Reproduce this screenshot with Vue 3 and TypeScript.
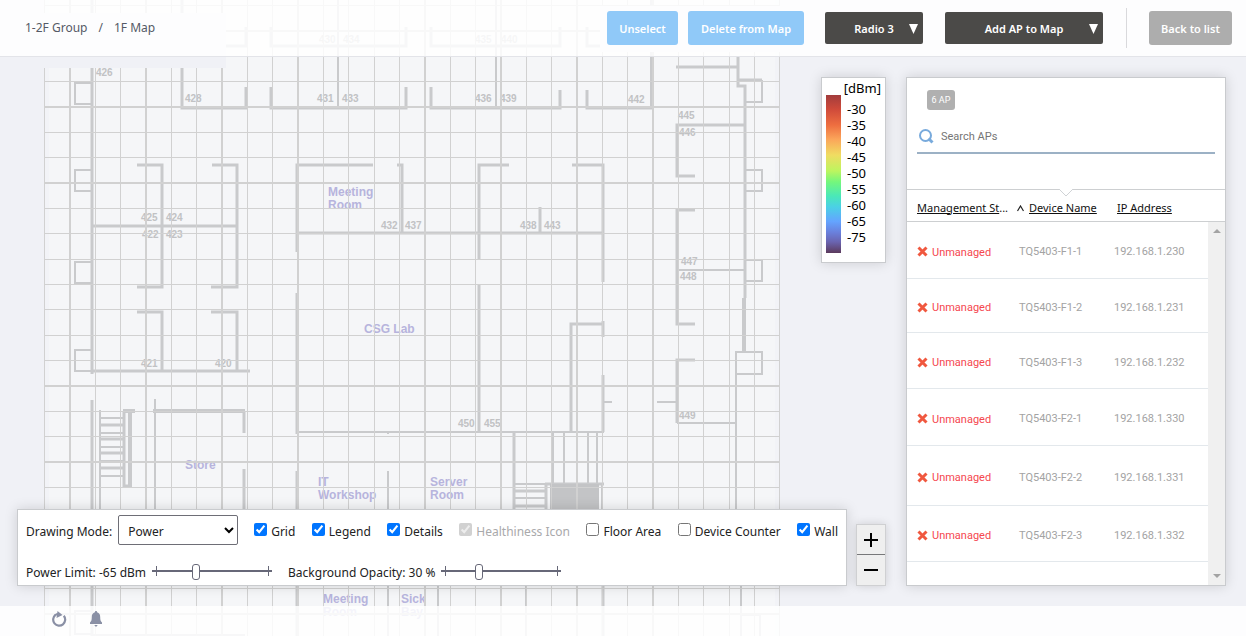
<script setup lang="ts">
import { ref } from 'vue'

interface AccessPoint {
  name: string
  ip: string
  height: number
}

const accessPoints: AccessPoint[] = [
  { name: 'TQ5403-F1-1', ip: '192.168.1.230', height: 57 },
  { name: 'TQ5403-F1-2', ip: '192.168.1.231', height: 54 },
  { name: 'TQ5403-F1-3', ip: '192.168.1.232', height: 56 },
  { name: 'TQ5403-F2-1', ip: '192.168.1.330', height: 57 },
  { name: 'TQ5403-F2-2', ip: '192.168.1.331', height: 60 },
  { name: 'TQ5403-F2-3', ip: '192.168.1.332', height: 56 },
]

const layers = ref([
  { id: 'grid', label: 'Grid', checked: true, disabled: false },
  { id: 'legend', label: 'Legend', checked: true, disabled: false },
  { id: 'details', label: 'Details', checked: true, disabled: false },
  { id: 'health', label: 'Healthiness Icon', checked: true, disabled: true },
  { id: 'floor', label: 'Floor Area', checked: false, disabled: false },
  { id: 'counter', label: 'Device Counter', checked: false, disabled: false },
  { id: 'wall', label: 'Wall', checked: true, disabled: false },
])

const levels = [-30, -35, -40, -45, -50, -55, -60, -65, -75]
const powerLimit = ref(-65)
const opacity = ref(30)
const search = ref('')

// Grid lines of the floor plan
const thinX = [44, 95, 120, 171, 196, 247, 272, 323, 348, 374, 399, 450, 475, 526, 551, 602, 627, 678, 703, 729, 754, 779]
const thickX = [70, 146, 222, 298, 425, 501, 577, 653]
const thinY = [5, 56, 81, 132, 157, 208, 233, 259, 284, 309, 335, 360, 411, 436, 487, 512, 563, 588]
const thickY = [31, 107, 183, 386, 462, 538, 614]

// Walls: path, stroke width
const walls: [string, number][] = [
  ['M92 0V374 M92 400V636 M92 226H238 M92 371H250', 3],
  ['M92 83H75V104H92 M92 170H75V191H92 M92 262H75V283H92 M92 350H75V371H92 M92 611H75V634H92', 2],
  ['M182 0V108H247 M246 108V87 M226 46H246V27', 3],
  ['M271 87V108H406V87 M271 27V46H406V27', 3],
  ['M338 0V107 M496 0V107', 2],
  ['M431 87V108H560V90 M431 27V46H560V27 M587 90V108H653 M587 27V46H600', 3],
  ['M652 0V108', 4],
  ['M137 165H162V287H137 M212 165H237V287H211 M137 312H162V371 M211 312H237V371', 3],
  ['M297 252V165H373 M397 165H402V233 M298 233H604 M297 293V434', 3],
  ['M479 259V165H509 M572 165H603V282 M540 207V233 M479 284V431', 3],
  ['M571 431V324H604 M603 321V337 M603 375V432', 3],
  ['M298 432H604 M604 402H612 M657 402H677 M677 423H736', 2],
  ['M676 67H738 M738 57V86H745V298 M738 80H762', 3],
  ['M762 80V102H745 M745 170H762V191H745 M745 260H762V281H745 M736 510V352H762V374H736', 2],
  ['M744 298V352', 4],
  ['M745 125H677V176H695 M695 210H677V324H695 M695 360H677V423', 3],
  ['M677 270H744', 2],
  ['M100 410V510 M100 418H124 M100 433H124 M100 447H124 M100 461H124 M100 476H124 M155 399V510', 2],
  ['M100 425H124 M100 439H124 M100 453H124 M100 468H124 M124 411V487', 3],
  ['M123 411H135 M130 411V487 M153 411H245', 4],
  ['M244 411V433 M244 469V510 M297 471V636 M124 486H132', 3],
  ['M388 471V636 M388 431V434 M438 586V636 M526 586V636 M741 586V636 M741 615H760V636 M92 635H245', 2],
  ['M514 432V510 M603 586V636 M545 484H604 M546 484V510 M514 506H546 M514 491H546', 3],
  ['M553 432V484 M564 432V484 M577 432V484 M588 432V484 M597 432V484 M602 484V510 M514 484H546 M514 498H546', 2],
]

const rooms: [string, number, number][] = [
  ['430', 319, 43], ['434', 343, 43], ['435', 475, 43], ['440', 501, 43],
  ['426', 96, 76], ['428', 185, 102], ['431', 317, 102], ['433', 342, 102],
  ['436', 475, 102], ['439', 500, 102], ['442', 628, 103], ['445', 678, 119],
  ['446', 679, 136], ['425', 141, 221], ['424', 166, 221], ['422', 142, 238],
  ['423', 166, 238], ['432', 381, 229], ['437', 405, 229], ['438', 520, 229],
  ['443', 544, 229], ['447', 681, 265], ['448', 680, 280], ['421', 141, 367],
  ['420', 215, 367], ['449', 679, 419], ['450', 458, 427], ['455', 484, 427],
]

const areas: [string, number, number][] = [
  ['Meeting', 328, 196], ['Room', 328, 209], ['CSG Lab', 364, 333], ['Store', 185, 469],
  ['IT', 318, 486], ['Workshop', 318, 499], ['Server', 430, 486], ['Room', 430, 499],
  ['Meeting', 323, 603], ['Room', 323, 616], ['Sick', 401, 603], ['Bay', 401, 616],
]
</script>

<template>
  <div class="app">
    <svg class="floor" width="780" height="636" viewBox="0 0 780 636" role="img" aria-label="1F floor plan">
      <rect x="44" y="0" width="736" height="636" fill="#f2f3f7" />
      <rect x="49" y="0" width="726" height="636" fill="#f5f6f8" />
      <path v-for="([d, w], i) in walls" :key="i" :d="d" :stroke-width="w" fill="none" stroke="#c9cacc" />
      <rect x="550" y="484" width="49" height="26" fill="#c3c4c6" />
      <g class="room">
        <text v-for="([t, x, y], i) in rooms" :key="i" :x="x" :y="y">{{ t }}</text>
      </g>
      <g class="area">
        <text v-for="([t, x, y], i) in areas" :key="i" :x="x" :y="y">{{ t }}</text>
      </g>
      <g fill="#d1d1d1">
        <rect v-for="x in thinX" :key="'a' + x" :x="x" y="0" width="1" height="636" />
        <rect v-for="x in thickX" :key="'b' + x" :x="x - 1" y="0" width="2" height="636" />
        <rect v-for="y in thinY" :key="'c' + y" x="44" :y="y" width="736" height="1" />
        <rect v-for="y in thickY" :key="'d' + y" x="44" :y="y - 1" width="736" height="2" />
      </g>
      <rect x="0" y="13" width="226" height="55" fill="#f0f1f6" />
      <rect x="600" y="6" width="180" height="46" fill="#f0f1f6" />
    </svg>

    <header class="top">
      <nav class="crumbs" aria-label="Breadcrumb">
        <a href="#group">1-2F Group</a>
        <span>/</span>
        <span>1F Map</span>
      </nav>
      <div class="actions">
        <button class="btn blue unselect" type="button">Unselect</button>
        <button class="btn blue delete" type="button">Delete from Map</button>
        <div class="drop radio">
          <select aria-label="Radio"><option>Radio 3</option></select>
          <svg width="9" height="10" viewBox="0 0 9 10"><path d="M0 0H9L4.500 10Z" fill="#fff" /></svg>
        </div>
        <div class="drop add">
          <select aria-label="Add AP to Map"><option>Add AP to Map</option></select>
          <svg width="9" height="10" viewBox="0 0 9 10"><path d="M0 0H9L4.500 10Z" fill="#fff" /></svg>
        </div>
        <span class="divider"></span>
        <button class="btn gray" type="button">Back to list</button>
      </div>
    </header>

    <main class="main">
      <div class="stage">
        <section class="legend card" aria-label="Signal level">
          <div class="unit">[dBm]</div>
          <div class="scale">
            <div class="bar"></div>
            <ul>
              <li v-for="l in levels" :key="l">{{ l }}</li>
            </ul>
          </div>
        </section>

        <div class="bottom">
          <section class="controls card">
            <div class="line">
              <label for="mode">Drawing Mode:</label>
              <div class="mode">
                <select id="mode"><option>Power</option></select>
                <svg width="10" height="7" viewBox="0 0 10 7"><path d="M1 1L5 5L9 1" fill="none" stroke="#000" stroke-width="2" /></svg>
              </div>
              <div class="checks">
                <label v-for="l in layers" :key="l.id" :class="{ off: l.disabled }">
                  <input v-model="l.checked" type="checkbox" :disabled="l.disabled" />{{ l.label }}
                </label>
              </div>
            </div>
            <div class="line sliders">
              <label for="limit">Power Limit: {{ powerLimit }} dBm</label>
              <input id="limit" v-model.number="powerLimit" type="range" min="-85" max="-29" />
              <label class="second" for="opacity">Background Opacity: {{ opacity }} %</label>
              <input id="opacity" v-model.number="opacity" type="range" min="0" max="100" />
            </div>
          </section>
          <div class="zoom">
            <button type="button" aria-label="Zoom in">
              <svg width="14" height="14" viewBox="0 0 14 14"><path d="M0 7H14M7 0V14" stroke="#000" stroke-width="2" /></svg>
            </button>
            <button type="button" aria-label="Zoom out">
              <svg width="14" height="14" viewBox="0 0 14 14"><path d="M0 7H14" stroke="#000" stroke-width="2" /></svg>
            </button>
          </div>
        </div>
      </div>

      <aside class="devices card">
        <div class="tools">
          <span class="badge">6 AP</span>
          <label class="search">
            <svg width="15" height="15" viewBox="0 0 15 15">
              <circle cx="6.500" cy="6.500" r="5.500" fill="none" stroke="#78aadc" stroke-width="2" />
              <path d="M9.500 9.500L13.500 13.500" stroke="#78aadc" stroke-width="3" />
            </svg>
            <input v-model="search" type="text" placeholder="Search APs" aria-label="Search APs" />
          </label>
        </div>
        <div class="list">
          <table>
            <thead>
              <tr>
                <th class="c1"><a href="#status">Management St</a>...</th>
                <th class="c2">
                  <svg width="7" height="7" viewBox="0 0 7 7"><path d="M0.500 6L3.500 1L6.500 6" fill="none" stroke="#222" stroke-width="1.200" /></svg><a href="#name">Device Name</a>
                </th>
                <th class="c3"><a href="#ip">IP Address</a></th>
              </tr>
            </thead>
            <tbody>
              <tr v-for="ap in accessPoints" :key="ap.name" :style="{ height: ap.height + 'px' }">
                <td class="c1 bad">
                  <svg width="11" height="11" viewBox="0 0 11 11"><path d="M1.500 1.500L9.500 9.500M9.500 1.500L1.500 9.500" stroke="#f0583f" stroke-width="3" /></svg>
                  <span>Unmanaged</span>
                </td>
                <td>{{ ap.name }}</td>
                <td class="ip">{{ ap.ip }}</td>
              </tr>
            </tbody>
          </table>
          <svg class="notch" width="14" height="8" viewBox="0 0 14 8"><path d="M0 0L7 7L14 0" fill="#fff" stroke="#d0d3d6" /></svg>
          <div class="scroll" aria-hidden="true">
            <svg width="8" height="4" viewBox="0 0 8 4"><path d="M0 4L4 0L8 4Z" fill="#a3a3a3" /></svg>
            <svg width="8" height="4" viewBox="0 0 8 4"><path d="M0 0L4 4L8 0Z" fill="#a3a3a3" /></svg>
          </div>
        </div>
      </aside>
    </main>

    <footer class="foot">
      <button type="button" aria-label="Refresh">
        <svg width="16" height="16" viewBox="0 0 16 16">
          <path d="M12.800 4.800A6 6 0 1 1 4.500 3.900" fill="none" stroke="#8a90a5" stroke-width="2.200" />
          <path d="M6.500 0L11.500 4L5.500 7Z" fill="#8a90a5" />
          <path d="M4 4.300Q6 2.800 9 3.200" fill="none" stroke="#8a90a5" stroke-width="2" />
        </svg>
      </button>
      <button type="button" aria-label="Notifications">
        <svg width="12" height="16" viewBox="0 0 12 16">
          <path d="M6 0C6.700 0 7.100 0.500 7.100 1.300C9.300 1.900 10.200 3.600 10.200 6C10.200 9 10.600 10.300 12 11.500V13H0V11.500C1.400 10.300 1.800 9 1.800 6C1.800 3.600 2.700 1.900 4.900 1.300C4.900 0.500 5.300 0 6 0ZM4.500 14H7.500C7.300 15.300 6.800 15.600 6 15.600C5.200 15.600 4.700 15.300 4.500 14Z" fill="#8a90a5" />
        </svg>
      </button>
    </footer>
  </div>
</template>

<style>
body {
  background: #f0f1f6;
}
</style>

<style scoped>
* {
  box-sizing: border-box;
}
.app {
  position: relative;
  display: flex;
  flex-direction: column;
  min-height: 100vh;
  overflow: hidden;
  background: #f0f1f6;
  font-family: "Noto Sans", "Open Sans", sans-serif;
  font-size: 12px;
  color: #222;
}
button,
select,
input {
  font-family: inherit;
}
a {
  color: inherit;
}
.floor {
  position: absolute;
  left: 0;
  top: 0;
}
.floor text {
  font-family: "Liberation Sans", sans-serif;
  font-weight: bold;
}
.room text {
  font-size: 10px;
  fill: #c1c2c4;
}
.area text {
  font-size: 12px;
  fill: #b7b4dd;
}
.top {
  position: relative;
  display: flex;
  align-items: center;
  justify-content: space-between;
  height: 57px;
  padding: 0 14px 0 25px;
  border-bottom: 1px solid #e3e4e9;
  background: rgba(255, 255, 255, 0.85);
}
.crumbs {
  display: flex;
  gap: 11px;
  padding-bottom: 2px;
  color: #555a66;
}
.crumbs a {
  text-decoration: none;
}
.actions {
  display: flex;
  align-items: center;
}
.btn {
  height: 34px;
  padding: 0;
  border: 0;
  border-radius: 3px;
  font-size: 11px;
  font-weight: 600;
  color: #fff;
}
.blue {
  background: #90c9f8;
}
.unselect {
  width: 71px;
}
.delete {
  width: 116px;
  margin: 0 21px 0 10px;
}
.gray {
  width: 83px;
  background: #adadad;
}
.drop {
  position: relative;
}
.drop select {
  appearance: none;
  width: 100%;
  height: 32px;
  padding: 0;
  border: 0;
  border-radius: 2px;
  background: #4b4a48;
  color: #fff;
  font-size: 11px;
  font-weight: 600;
  text-align: center;
  text-align-last: center;
}
.drop svg {
  position: absolute;
  right: 5px;
  top: 12px;
  pointer-events: none;
}
.radio {
  width: 98px;
  margin-right: 22px;
}
.add {
  width: 158px;
}
.divider {
  width: 1px;
  height: 40px;
  margin: 0 22px 0 23px;
  background: #d9d9dc;
}
.main {
  position: relative;
  flex: 1;
  display: flex;
  gap: 20px;
  padding: 20px 20px 20px 17px;
}
.card {
  border: 1px solid #c9cbce;
  background: #fff;
  box-shadow: 0 0 12px rgba(0, 0, 0, 0.15);
}
.stage {
  flex: 1;
  display: flex;
  flex-direction: column;
  justify-content: space-between;
  min-width: 0;
}
.legend {
  align-self: flex-end;
  width: 65px;
  height: 186px;
  font-size: 13px;
  color: #000;
}
.unit {
  height: 17px;
  padding-right: 4px;
  line-height: 20px;
  text-align: right;
}
.scale {
  display: flex;
  gap: 6px;
  padding-left: 4px;
}
.bar {
  width: 15px;
  height: 158px;
  background: linear-gradient(#a23c3c, #cf4a3a 9%, #ee6e40 19%, #fba55a 28%, #f0dc62 38%, #bdf55f 48%, #74f77c 55%, #4ae8b8 64%, #4bd0e6 71%, #64a4ff 80%, #6a80dc 87%, #6a64b0 93%, #5c3a5c);
}
.scale ul {
  margin: 6px 0 0;
  padding: 0;
  list-style: none;
}
.scale li {
  height: 16px;
  line-height: 16px;
}
.bottom {
  display: flex;
  align-items: flex-end;
  gap: 9px;
}
.controls {
  flex: 1;
  height: 77px;
  padding: 5px 8px;
}
.line {
  display: flex;
  align-items: center;
  height: 30px;
}
.line label {
  padding-top: 2px;
}
.mode {
  position: relative;
  width: 120px;
  margin: 0 16px 0 6px;
}
.mode select {
  appearance: none;
  width: 100%;
  height: 30px;
  padding: 2px 9px 0;
  border: 1px solid #6e6e76;
  border-radius: 2px;
  background: #fff;
  font-size: 12px;
  color: #222;
}
.mode svg {
  position: absolute;
  right: 4px;
  top: 12px;
  pointer-events: none;
}
.checks {
  flex: 1;
  display: flex;
  justify-content: space-between;
}
.checks label {
  display: flex;
  align-items: center;
  gap: 4px;
  white-space: nowrap;
}
.checks input {
  width: 13px;
  height: 13px;
  margin: 0 0 4px;
}
.checks .off {
  color: #a9a9ab;
}
.sliders {
  margin-top: 11px;
}
.sliders input {
  appearance: none;
  width: 120px;
  height: 16px;
  margin: 2px 0 0 6px;
  background:
    linear-gradient(#676878, #676878) 4px 2px / 1px 10px no-repeat,
    linear-gradient(#676878, #676878) 116px 2px / 1px 10px no-repeat,
    linear-gradient(#676878, #676878) 0 6px / 120px 2px no-repeat;
}
.sliders input::-webkit-slider-thumb {
  appearance: none;
  width: 8px;
  height: 16px;
  border: 1px solid #676878;
  border-radius: 3px;
  background: #fff;
}
.sliders .second {
  margin-left: 16px;
}
.zoom {
  width: 30px;
  border: 1px solid #cfd0d2;
  box-shadow: 0 0 10px rgba(0, 0, 0, 0.15);
}
.zoom button {
  display: flex;
  align-items: center;
  justify-content: center;
  width: 100%;
  height: 30px;
  padding: 0;
  border: 0;
  background: #efefef;
}
.zoom button:first-child {
  border-bottom: 1px solid #77787a;
}
.devices {
  display: flex;
  flex-direction: column;
  width: 320px;
}
.tools {
  display: flex;
  flex-direction: column;
  align-items: flex-start;
  height: 111px;
  padding: 12px 10px 0;
}
.badge {
  width: 28px;
  height: 20px;
  margin-left: 10px;
  border-radius: 3px;
  background: #b0b0b0;
  color: #fff;
  font-family: Roboto, sans-serif;
  font-size: 9px;
  line-height: 21px;
  text-align: center;
}
.search {
  display: flex;
  align-items: center;
  gap: 7px;
  width: 100%;
  height: 34px;
  margin-top: 10px;
  padding: 0 2px;
  border-bottom: 2px solid #9cb1c5;
}
.search input {
  flex: 1;
  min-width: 0;
  padding: 0;
  border: 0;
  outline: 0;
  background: transparent;
  font-family: Roboto, sans-serif;
  font-size: 11px;
}
.search input::placeholder {
  color: #757575;
}
.list {
  position: relative;
  flex: 1;
  border-top: 1px solid #cdcfd1;
}
table {
  width: 100%;
  border-collapse: separate;
  border-spacing: 0;
  table-layout: fixed;
}
thead tr {
  height: 32px;
}
th {
  padding: 3px 0 0;
  border-bottom: 1px solid #cdcfd1;
  font-size: 11px;
  font-weight: 400;
  text-align: left;
  white-space: nowrap;
  color: #111;
}
th.c1 {
  width: 110px;
  padding-left: 10px;
}
th.c2 {
  width: 97px;
}
th.c3 {
  padding-left: 3px;
}
.c2 svg {
  margin-right: 5px;
}
td {
  padding: 3px 0 0 2px;
  border-bottom: 1px solid #e3e8ec;
  font-family: Roboto, sans-serif;
  font-size: 11px;
  color: #a3a3a3;
}
td.c1 {
  padding-left: 10px;
}
td.ip {
  padding-left: 0;
}
td.bad {
  color: #f5474f;
}
td.bad svg {
  margin-right: 4px;
  vertical-align: middle;
}
td.bad span {
  vertical-align: middle;
}
.notch {
  position: absolute;
  left: 152px;
  top: -1px;
}
.scroll {
  position: absolute;
  top: 32px;
  right: 0;
  bottom: 0;
  display: flex;
  flex-direction: column;
  align-items: center;
  justify-content: space-between;
  width: 17px;
  padding: 7px 0;
  background: #f0f0f0;
}
.foot {
  position: relative;
  display: flex;
  align-items: center;
  gap: 23px;
  height: 30px;
  padding: 0 51px 4px;
  background: rgba(255, 255, 255, 0.85);
}
.foot button {
  display: flex;
  padding: 0;
  border: 0;
  background: none;
}
</style>
